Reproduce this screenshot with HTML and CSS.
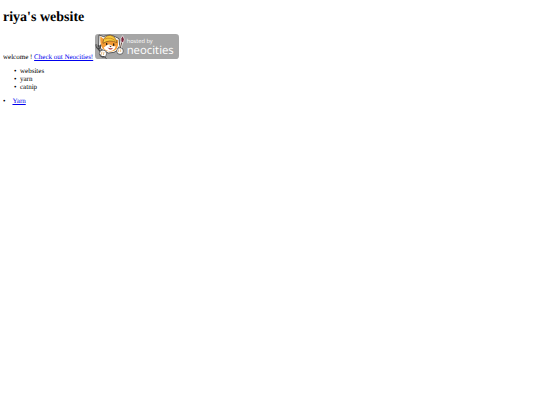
FILE: index.html
```html
<!DOCTYPE html>
<html lang="en">
<head>
    <meta charset="UTF-8">
    <meta name="viewport" content="width=device-width, initial-scale=1.0">
    <title>riya's website</title>
    <link rel="stylesheet" href="styles.css">
</head>
<body>

<h1>riya's website</h1>

<div class="welcome">
    welcome !
    <a href="https://neocities.org">Check out Neocities!</a>
    <svg class="badge" viewBox="0 0 252 75" role="img" aria-label="Hosted by Neocities">
        <rect width="252" height="75" rx="10" fill="#a6a6a6"/>
        <!-- cat outline -->
        <path d="M12 3L26 8Q44-2 62 9L72 14L74 35L67 49L57 55L40 57L30 52L19 46L11 32Z" fill="#fff" stroke="#222" stroke-width="2"/>
        <!-- face -->
        <path d="M16 7L29 17L59 19L69 17L69 34Q66 49 53 52Q36 55 23 44Q14 32 16 7Z" fill="#f39b35"/>
        <path d="M35 34Q44 28 53 37L62 37Q59 50 48 51Q31 51 26 41Z" fill="#fff"/>
        <path d="M24 24Q27 4 46 4Q62 7 66 26Q44 15 24 28Z" fill="#f8cb3d" stroke="#7b4818" stroke-width="2"/>
        <path d="M30 15Q47 8 61 20" fill="none" stroke="#b76c19" stroke-width="2"/>
        <ellipse cx="35" cy="30" rx="2" ry="4" fill="#1b1714"/>
        <ellipse cx="56" cy="32" rx="2" ry="4" fill="#1b1714"/>
        <path d="M43 35L50 36L46 40Z" fill="#47241b"/>
        <path d="M37 40Q45 45 54 41Q50 49 43 46Z" fill="#a9302f"/>
        <!-- fork -->
        <path d="M3 31L5 40L10 45L16 40L17 32M10 32V45L22 61" fill="none" stroke="#444" stroke-width="4"/>
        <path d="M4 33L7 41L13 40" fill="none" stroke="#ccc" stroke-width="1"/>
        <circle cx="24" cy="59" r="11" fill="#fff" stroke="#333" stroke-width="2"/>
        <path d="M15 61Q19 72 28 68L34 74" fill="none" stroke="#333" stroke-width="3"/>
        <path d="M21 53L19 62M27 54L25 63" stroke="#d99843" stroke-width="2"/>
        <!-- brush -->
        <path d="M75 49L81 20" stroke="#fff" stroke-width="7"/>
        <path d="M75 48L81 20" stroke="#624334" stroke-width="3"/>
        <path d="M78 24Q75 13 83 5Q92 16 85 26Z" fill="#7c263c" stroke="#fff" stroke-width="2"/>
        <circle cx="75" cy="51" r="10" fill="#fff" stroke="#333" stroke-width="2"/>
        <path d="M71 46V54M77 46V54" stroke="#d99843" stroke-width="2"/>
        <text class="badge-small" x="95" y="27">hosted by</text>
        <text class="badge-name" x="95" y="60">neocities</text>
    </svg>
</div>

<ul>
    <li>websites</li>
    <li>yarn</li>
    <li>catnip</li>
</ul>

<ul class="links">
    <li><a href="#yarn">Yarn</a></li>
</ul>

</body>
</html>
```
FILE: styles.css
```css
body {
    margin: 3px;
    font-family: "Liberation Serif", "Times New Roman", serif;
    font-size: 7px;
    line-height: 8px;
    text-rendering: geometricPrecision;
    background-color: #fff;
    color: #000;
}

h1 {
    margin: 7px 0 8px;
    font-size: 14px;
    line-height: 16px;
}

a {
    color: #0000ee;
}

.badge {
    width: 84px;
    height: 25px;
}

.badge text {
    font-family: "Open Sans", "Noto Sans", sans-serif;
    fill: #fff;
}

.badge-small {
    font-size: 17px;
}

.badge-name {
    font-size: 34px;
}

ul {
    margin: 6px 0;
    padding-left: 17px;
    list-style-type: "•\2002";
}

.links {
    padding-left: 0;
    list-style-position: inside;
    list-style-type: "•\2003";
}
```
